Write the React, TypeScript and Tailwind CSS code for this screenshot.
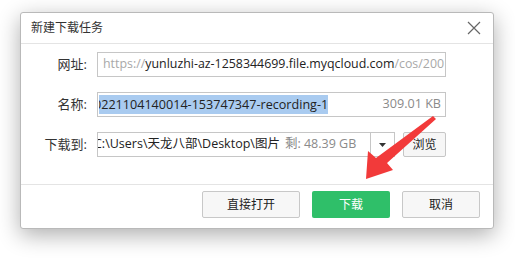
import React from "react";

const font = { fontFamily: '"Open Sans", "Noto Sans CJK SC", sans-serif' };

export default function App() {
  return (
    <div className="relative w-[515px] h-[258px] bg-white overflow-hidden pl-[20px] pt-[12px]" style={font}>
      <div className="w-[474px] h-[217px] bg-white border border-[#b9b9b9] rounded-[3px] shadow-[0_6px_22px_rgba(0,0,0,0.32)] flex flex-col">
        {/* title bar */}
        <div className="h-[31px] shrink-0 border-b border-[#e4e4e4] flex items-center justify-between pl-[10px] pr-[12px]">
          <span className="text-[12px] text-[#333]">新建下载任务</span>
          <svg width="14" height="14" viewBox="0 0 14 14">
            <path d="M1 1 L13 13 M13 1 L1 13" stroke="#666" strokeWidth="1.2" fill="none" />
          </svg>
        </div>
        {/* body */}
        <div className="flex flex-col gap-[15px] pt-[8px] h-[140px] shrink-0">
          <div className="flex items-center h-[25px]">
            <div className="w-[66px] text-right text-[13px] text-[#333]">网址:</div>
            <div className="ml-[10px] w-[349px] h-[25px] border border-[#c6c6c6] flex items-center px-[5px] overflow-hidden whitespace-nowrap text-[12.4px]">
              <span className="text-[#a8a8a8]">https://</span>
              <span className="text-[#222]">yunluzhi-az-1258344699.file.myqcloud.com</span>
              <span className="text-[#a8a8a8]">/cos/200</span>
            </div>
          </div>
          <div className="flex items-center h-[25px]">
            <div className="w-[66px] text-right text-[13px] text-[#333]">名称:</div>
            <div className="ml-[10px] w-[349px] h-[25px] border border-[#c6c6c6] flex items-center pl-[1px] pr-[4px] overflow-hidden whitespace-nowrap text-[12.6px]">
              <div className="flex-1 overflow-hidden">
                <span className="bg-[#a9cbf0] text-[#222] ml-[-5px] inline-block leading-[19px]">0221104140014-153747347-recording-1</span>
              </div>
              <span className="text-[#8a8a8a] shrink-0">309.01 KB</span>
            </div>
          </div>
          <div className="flex items-center h-[25px]">
            <div className="w-[66px] text-right text-[13px] text-[#333]">下载到:</div>
            <div className="ml-[10px] w-[274px] h-[25px] border border-[#c6c6c6] flex items-center pl-[1px] overflow-hidden whitespace-nowrap text-[12.5px]">
              <span className="text-[#222] ml-[-5px]">C:\Users\天龙八部\Desktop\图片</span>
              <span className="text-[#8a8a8a] ml-[5px]">剩: 48.39 GB</span>
            </div>
            <div className="w-[24px] h-[25px] border border-l-0 border-[#c6c6c6] flex items-center justify-center">
              <svg width="7" height="4" viewBox="0 0 7 4">
                <path d="M0 0 L7 0 L3.5 4 Z" fill="#333" />
              </svg>
            </div>
            <div className="ml-[8px] w-[43px] h-[25px] border border-[#c6c6c6] rounded-[2px] bg-[#f6f6f6] flex items-center justify-center text-[12px] text-[#222]">
              浏览
            </div>
          </div>
        </div>
        {/* footer */}
        <div className="border-t border-[#e4e4e4] flex justify-end gap-[12px] pt-[6px] pr-[13px]">
          <div className="w-[98px] h-[27px] border border-[#c8c8c8] rounded-[2px] bg-[#f7f7f7] flex items-center justify-center text-[12px] text-[#222]">直接打开</div>
          <div className="w-[78px] h-[27px] rounded-[2px] bg-[#2fbf69] flex items-center justify-center text-[12px] text-white">下载</div>
          <div className="w-[78px] h-[27px] border border-[#c8c8c8] rounded-[2px] bg-[#f7f7f7] flex items-center justify-center text-[12px] text-[#222]">取消</div>
        </div>
      </div>
      <svg className="absolute left-0 top-0 pointer-events-none" width="515" height="258" viewBox="0 0 515 258">
        <polygon points="433,116 436,119 387,163 393,170 366,179 368,151 376,158" fill="#f23a3a" />
      </svg>
    </div>
  );
}
